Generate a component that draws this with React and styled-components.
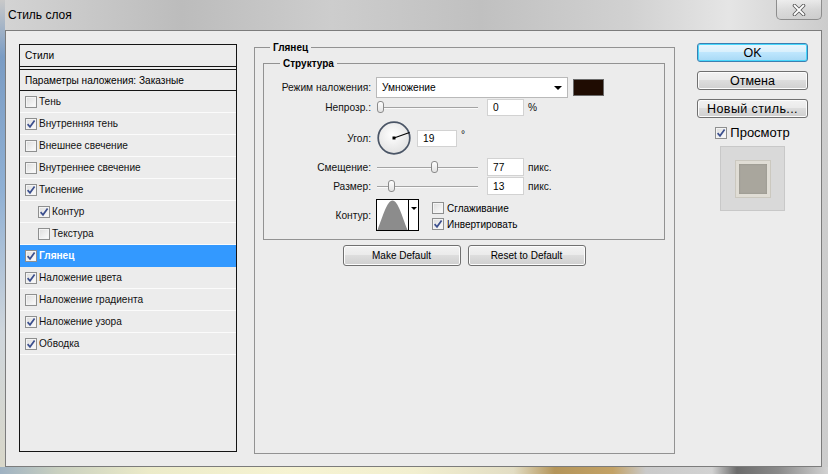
import styled, { createGlobalStyle } from "styled-components";

const GlobalStyle = createGlobalStyle`
  html, body {
    margin: 0;
    padding: 0;
  }
  body {
    width: 828px;
    height: 474px;
    overflow: hidden;
    font-family: "Liberation Sans", Arial, sans-serif;
    color: #000;
  }
`;

const Window = styled.div`
  width: 828px;
  height: 474px;
  box-sizing: border-box;
  display: flex;
  flex-direction: column;
  padding: 0 6px 7px 5px;
  background:
    linear-gradient(90deg, #9fb2c2 0%, #c9d0c0 7%, #ecebc9 18%, #f6f3d2 35%, #f2efd0 50%, #e2ddc4 62%, #b4955a 67%, #c3a266 74%, #cacaca 78%, #d2d2d2 86%, #6c6c6c 89%, #8a8a8a 94%, #d2d2d2 100%) bottom / 100% 7px no-repeat,
    linear-gradient(180deg, #c9c9c9 0%, #7a9cc4 12%, #8fb0d4 40%, #cfd6dc 70%, #d9d7c8 100%) left / 5px 100% no-repeat,
    linear-gradient(90deg, #d4d4d4 0%, #bcbcbc 22%, #cdcdcd 40%, #c0c0c0 58%, #d1d1d1 76%, #e5e5e5 88%, #cccccc 100%);
`;

const TitleBar = styled.div`
  height: 30px;
  display: flex;
  align-items: flex-start;
  flex-shrink: 0;
`;

const Title = styled.span`
  margin: 8px 0 0 3px;
  font-size: 12px;
  line-height: 14px;
`;

const CloseButton = styled.div`
  margin-left: auto;
  width: 46px;
  height: 20px;
  box-sizing: border-box;
  border: 1px solid #8d8d8d;
  border-top: none;
  border-radius: 0 0 5px 5px;
  background: linear-gradient(180deg, rgba(255, 255, 255, 0.55), rgba(230, 230, 230, 0.3) 50%, rgba(200, 200, 200, 0.35));
  display: flex;
  align-items: center;
  justify-content: center;
`;

const Client = styled.div`
  flex: 1;
  display: flex;
  align-items: flex-start;
  background: #ececec;
  border: 1px solid #7c7c7c;
  padding: 13px 0 0 13px;
`;

/* ---------- left list ---------- */

const StylesList = styled.div`
  width: 218px;
  height: 408px;
  box-sizing: border-box;
  border: 1px solid #141414;
  background: #ececec;
  font-size: 10.1px;
  flex-shrink: 0;
`;

const HeaderRow = styled.div`
  height: 22px;
  box-sizing: border-box;
  line-height: 21px;
  padding-left: 5px;
  border-bottom: 1px solid #141414;
  border-top: ${(p) => (p.$topLine ? "1px solid #141414" : "none")};
  margin-bottom: ${(p) => (p.$gap ? "2px" : "0")};
`;

const ItemRow = styled.div`
  height: 22px;
  box-sizing: border-box;
  display: flex;
  align-items: center;
  gap: 2px;
  padding-left: ${(p) => (p.$indent ? 18 : 5)}px;
  border-bottom: 1px solid ${(p) => (p.$selected ? "#3399ff" : "#fbfbfb")};
  background: ${(p) => (p.$selected ? "#3399ff" : "transparent")};
  color: ${(p) => (p.$selected ? "#fff" : "#111")};
  font-weight: ${(p) => (p.$selected ? "bold" : "normal")};
`;

const Box = styled.span`
  width: 12px;
  height: 12px;
  box-sizing: border-box;
  border: 1px solid #8e8f8f;
  background: linear-gradient(135deg, #dcdcdc, #fdfdfd);
  box-shadow: inset 0 0 0 1px #f4f4f4;
  display: inline-flex;
  align-items: center;
  justify-content: center;
  flex-shrink: 0;
`;

const CheckBox = ({ checked }) => (
  <Box>
    {checked && (
      <svg width="10" height="10" viewBox="0 0 10 10">
        <path d="M1.6 5.2 L4 7.8 L8.6 1.6" fill="none" stroke="#3b4f8e" strokeWidth="1.7" />
      </svg>
    )}
  </Box>
);

/* ---------- middle ---------- */

const GroupBox = styled.fieldset`
  margin: 0;
  box-sizing: border-box;
  border: 1px solid #929292;
  min-width: 0;
`;

const OuterGroup = styled(GroupBox)`
  margin: -3px 0 0 17px;
  width: 421px;
  height: 413px;
  padding: 3px 9px 0 8px;
  flex-shrink: 0;
`;

const InnerGroup = styled(GroupBox)`
  height: 183px;
  padding: 7px 0 0 0;
`;

const Legend = styled.legend`
  font-size: 10px;
  line-height: 13px;
  font-weight: bold;
  padding: 0 3px;
  margin-left: ${(p) => p.$offset}px;
`;

const Row = styled.div`
  display: flex;
  align-items: center;
  height: ${(p) => p.$h}px;
  margin-top: ${(p) => p.$mt || 0}px;
  font-size: 10.2px;
`;

const Label = styled.span`
  width: 107px;
  text-align: right;
  flex-shrink: 0;
  color: #111;
`;

const Select = styled.div`
  margin-left: 5px;
  width: 192px;
  height: 21px;
  box-sizing: border-box;
  border: 1px solid #b9b9b9;
  background: #fff;
  display: flex;
  align-items: center;
  padding: 0 5px;
  justify-content: space-between;
`;

const Arrow = styled.span`
  width: 0;
  height: 0;
  border-left: 4px solid transparent;
  border-right: 4px solid transparent;
  border-top: 4px solid #000;
`;

const Swatch = styled.div`
  margin-left: 5px;
  width: 31px;
  height: 17px;
  box-sizing: border-box;
  border: 1px solid #6a6a6a;
  background: #1f0c02;
`;

const Slider = styled.div`
  position: relative;
  margin-left: 6px;
  width: 101px;
  height: 17px;
  flex-shrink: 0;
`;

const Track = styled.div`
  position: absolute;
  left: 0;
  right: 0;
  top: 8px;
  height: 1px;
  background: #a3a3a3;
  box-shadow: 0 1px 0 #fafafa;
`;

const Thumb = styled.div`
  position: absolute;
  top: 2px;
  width: 7px;
  height: 12px;
  box-sizing: border-box;
  border: 1px solid #8a8a8a;
  border-radius: 3px 3px 3px 3px;
  background: linear-gradient(180deg, #ffffff, #e2e2e2);
`;

const NumberBox = styled.div`
  margin-left: ${(p) => p.$ml || 9}px;
  width: ${(p) => p.$w || 37}px;
  height: ${(p) => p.$h || 17}px;
  box-sizing: border-box;
  border: 1px solid #d2d2d2;
  background: #fff;
  padding-left: 5px;
  display: flex;
  align-items: center;
  flex-shrink: 0;
`;

const Unit = styled.span`
  margin-left: 4px;
  align-self: ${(p) => (p.$sup ? "flex-start" : "center")};
  margin-top: ${(p) => (p.$sup ? 8 : 0)}px;
  color: #111;
`;

const DialWrap = styled.div`
  margin-left: 6px;
  width: 34px;
  height: 34px;
  flex-shrink: 0;
`;

const ContourBox = styled.div`
  margin-left: 5px;
  width: 43px;
  height: 32px;
  box-sizing: border-box;
  border: 1px solid #000;
  background: #fff;
  display: flex;
  flex-shrink: 0;
`;

const ContourPreview = styled.div`
  flex: 1;
  display: flex;
  align-items: flex-end;
  justify-content: center;
`;

const ContourDrop = styled.div`
  width: 10px;
  border-left: 1px solid #000;
  display: flex;
  justify-content: center;
  padding-top: 7px;
  box-sizing: border-box;
`;

const SmallArrow = styled.span`
  width: 0;
  height: 0;
  border-left: 3px solid transparent;
  border-right: 3px solid transparent;
  border-top: 3px solid #000;
`;

const CheckColumn = styled.div`
  margin-left: 13px;
  display: flex;
  flex-direction: column;
  gap: 4px;
  align-self: flex-start;
  margin-top: 3px;
`;

const CheckLine = styled.label`
  display: flex;
  align-items: center;
  gap: ${(p) => p.$gap || 3}px;
  font-size: ${(p) => p.$size || 10}px;
`;

const ButtonRow = styled.div`
  display: flex;
  justify-content: center;
  gap: 7px;
  margin-top: 5px;
`;

const Button = styled.div`
  width: ${(p) => p.$w}px;
  height: ${(p) => p.$h}px;
  box-sizing: border-box;
  border: 1px solid ${(p) => (p.$primary ? "#3c7fb1" : "#707070")};
  border-radius: 3px;
  background: ${(p) =>
    p.$primary
      ? "linear-gradient(180deg, #eaf6fd 0%, #d9f0fc 45%, #bee6fd 50%, #a7d9f5 100%)"
      : "linear-gradient(180deg, #f2f2f2 0%, #ebebeb 45%, #dddddd 50%, #cfcfcf 100%)"};
  box-shadow: inset 0 0 0 1px ${(p) => (p.$primary ? "#48d7fb" : "#fcfcfc")};
  display: flex;
  align-items: center;
  justify-content: center;
  font-size: ${(p) => p.$size}px;
  letter-spacing: ${(p) => p.$ls || 0}px;
  color: #000;
`;

/* ---------- right ---------- */

const RightColumn = styled.div`
  margin: -1px 0 0 22px;
  width: 111px;
  display: flex;
  flex-direction: column;
  gap: 9px;
`;

const PreviewCheck = styled.div`
  display: flex;
  justify-content: center;
  margin-top: -2px;
`;

const PreviewBox = styled.div`
  margin: -3px 0 0 23px;
  width: 65px;
  height: 65px;
  box-sizing: border-box;
  border: 1px solid #c8c8c8;
  background: #d9d9d9;
  display: flex;
  align-items: center;
  justify-content: center;
`;

const PreviewTile = styled.div`
  width: 34px;
  height: 36px;
  box-sizing: border-box;
  border: 3px solid #e0ddd5;
  background: #a9a69d;
  box-shadow: 0 0 0 1px #cbc8bf, inset 0 0 2px #8f8c84;
`;

const items = [
  { label: "Тень", checked: false },
  { label: "Внутренняя тень", checked: true },
  { label: "Внешнее свечение", checked: false },
  { label: "Внутреннее свечение", checked: false },
  { label: "Тиснение", checked: true },
  { label: "Контур", checked: true, indent: true },
  { label: "Текстура", checked: false, indent: true },
  { label: "Глянец", checked: true, selected: true },
  { label: "Наложение цвета", checked: true },
  { label: "Наложение градиента", checked: false },
  { label: "Наложение узора", checked: true },
  { label: "Обводка", checked: true },
];

const Dial = () => (
  <svg width="34" height="34" viewBox="0 0 34 34">
    <defs>
      <radialGradient id="dialFill" cx="45%" cy="40%" r="60%">
        <stop offset="0%" stopColor="#ffffff" />
        <stop offset="100%" stopColor="#e2e2e2" />
      </radialGradient>
    </defs>
    <circle cx="17" cy="17" r="15.8" fill="url(#dialFill)" stroke="#4a5566" strokeWidth="1.7" />
    <line x1="17" y1="17" x2="32.5" y2="11.6" stroke="#000" strokeWidth="1.1" />
    <rect x="15.5" y="15.5" width="3" height="3" fill="#000" />
  </svg>
);

export default function App() {
  return (
    <>
      <GlobalStyle />
      <Window>
        <TitleBar>
          <Title>Стиль слоя</Title>
          <CloseButton>
            <svg width="14" height="12" viewBox="0 0 14 12">
              <path d="M2.5 1.5 L11.5 10.5 M11.5 1.5 L2.5 10.5" stroke="#5a5a5a" strokeWidth="3.6" strokeLinecap="round" />
              <path d="M2.5 1.5 L11.5 10.5 M11.5 1.5 L2.5 10.5" stroke="#fff" strokeWidth="1.8" strokeLinecap="round" />
            </svg>
          </CloseButton>
        </TitleBar>
        <Client>
          <StylesList>
            <HeaderRow $gap>Стили</HeaderRow>
            <HeaderRow $topLine>Параметры наложения: Заказные</HeaderRow>
            {items.map((it) => (
              <ItemRow key={it.label} $indent={it.indent} $selected={it.selected}>
                <CheckBox checked={it.checked} />
                <span>{it.label}</span>
              </ItemRow>
            ))}
          </StylesList>

          <OuterGroup>
            <Legend $offset={7}>Глянец</Legend>
            <InnerGroup>
              <Legend $offset={16}>Структура</Legend>
              <Row $h={21}>
                <Label>Режим наложения:</Label>
                <Select>
                  <span>Умножение</span>
                  <Arrow />
                </Select>
                <Swatch />
              </Row>
              <Row $h={17} $mt={1}>
                <Label>Непрозр.:</Label>
                <Slider>
                  <Track />
                  <Thumb style={{ left: 0 }} />
                </Slider>
                <NumberBox>0</NumberBox>
                <Unit>%</Unit>
              </Row>
              <Row $h={34} $mt={5}>
                <Label>Угол:</Label>
                <DialWrap>
                  <Dial />
                </DialWrap>
                <NumberBox $ml={6} $w={40}>19</NumberBox>
                <Unit $sup>°</Unit>
              </Row>
              <Row $h={18} $mt={3}>
                <Label>Смещение:</Label>
                <Slider>
                  <Track />
                  <Thumb style={{ left: 54 }} />
                </Slider>
                <NumberBox $h={18}>77</NumberBox>
                <Unit>пикс.</Unit>
              </Row>
              <Row $h={18} $mt={1}>
                <Label>Размер:</Label>
                <Slider>
                  <Track />
                  <Thumb style={{ left: 11 }} />
                </Slider>
                <NumberBox $h={18}>13</NumberBox>
                <Unit>пикс.</Unit>
              </Row>
              <Row $h={32} $mt={4}>
                <Label>Контур:</Label>
                <ContourBox>
                  <ContourPreview>
                    <svg width="31" height="30" viewBox="0 0 31 30">
                      <path d="M0.5 30 C 6 16, 10 0.5, 15.5 0.5 C 21 0.5, 25 16, 30.5 30 Z" fill="#8c8c8c" />
                    </svg>
                  </ContourPreview>
                  <ContourDrop>
                    <SmallArrow />
                  </ContourDrop>
                </ContourBox>
                <CheckColumn>
                  <CheckLine>
                    <CheckBox checked={false} />
                    Сглаживание
                  </CheckLine>
                  <CheckLine>
                    <CheckBox checked />
                    Инвертировать
                  </CheckLine>
                </CheckColumn>
              </Row>
            </InnerGroup>
            <ButtonRow>
              <Button $w={118} $h={21} $size={10}>Make Default</Button>
              <Button $w={118} $h={21} $size={10}>Reset to Default</Button>
            </ButtonRow>
          </OuterGroup>

          <RightColumn>
            <Button $primary $w={111} $h={19} $size={12.5}>OK</Button>
            <Button $w={111} $h={19} $size={12.5}>Отмена</Button>
            <Button $w={111} $h={19} $size={12.5} $ls={0.4}>Новый стиль...</Button>
            <PreviewCheck>
              <CheckLine $size={13} $gap={3}>
                <CheckBox checked />
                Просмотр
              </CheckLine>
            </PreviewCheck>
            <PreviewBox>
              <PreviewTile />
            </PreviewBox>
          </RightColumn>
        </Client>
      </Window>
    </>
  );
}
